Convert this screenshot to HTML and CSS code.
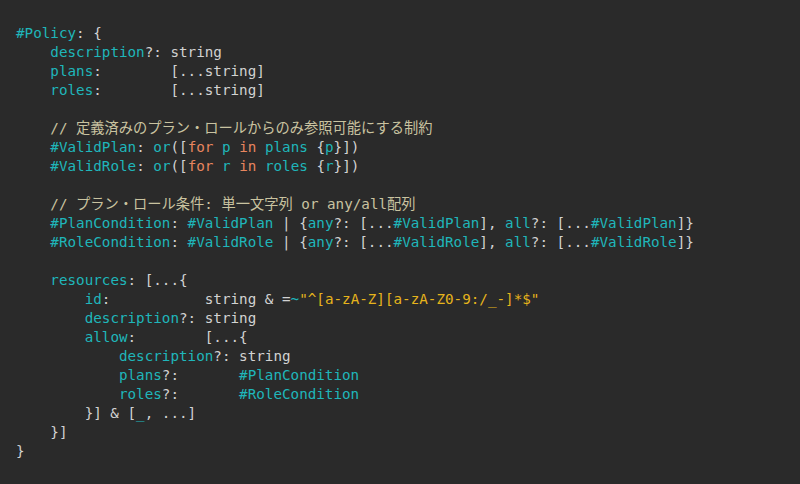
FILE: index.html
```html
<!DOCTYPE html>
<html lang="ja">
<head>
<meta charset="utf-8">
<title>Policy schema</title>
<link rel="stylesheet" href="styles.css">
</head>
<body>
<pre class="code"><span class="k">#Policy</span>: {
    <span class="k">description</span>?: string
    <span class="k">plans</span>:        [...string]
    <span class="k">roles</span>:        [...string]

    <span class="c">// 定義済みのプラン・ロールからのみ参照可能にする制約</span>
    <span class="k">#ValidPlan</span>: <span class="k">or</span>([<span class="o">for</span> <span class="k">p</span> <span class="o">in</span> <span class="k">plans</span> {<span class="k">p</span>}])
    <span class="k">#ValidRole</span>: <span class="k">or</span>([<span class="o">for</span> <span class="k">r</span> <span class="o">in</span> <span class="k">roles</span> {<span class="k">r</span>}])

    <span class="c">// プラン・ロール条件: 単一文字列 or any/all配列</span>
    <span class="k">#PlanCondition</span>: <span class="k">#ValidPlan</span> | {<span class="k">any</span>?: [...<span class="k">#ValidPlan</span>], <span class="k">all</span>?: [...<span class="k">#ValidPlan</span>]}
    <span class="k">#RoleCondition</span>: <span class="k">#ValidRole</span> | {<span class="k">any</span>?: [...<span class="k">#ValidRole</span>], <span class="k">all</span>?: [...<span class="k">#ValidRole</span>]}

    <span class="k">resources</span>: [...{
        <span class="k">id</span>:           string &amp; =<span class="k">~</span><span class="s">"^[a-zA-Z][a-zA-Z0-9:/_-]*$"</span>
        <span class="k">description</span>?: string
        <span class="k">allow</span>:        [...{
            <span class="k">description</span>?: string
            <span class="k">plans</span>?:       <span class="k">#PlanCondition</span>
            <span class="k">roles</span>?:       <span class="k">#RoleCondition</span>
        }] &amp; [<span class="k">_</span>, ...]
    }]
}</pre>
</body>
</html>
```
FILE: styles.css
```css
html, body {
  margin: 0;
  padding: 0;
  background: #2a2a2a;
  height: 100%;
}

.code {
  margin: 0;
  padding: 24px 0 0 16px;
  font-family: "DejaVu Sans Mono", "Noto Sans CJK JP", monospace;
  font-size: 14.25px;
  line-height: 19px;
  color: #d2d2d2;
  white-space: pre;
}

.k { color: #1fb6ba; }
.c { color: #c9c3a0; }
.o { color: #e8865f; }
.s { color: #e6b41c; }
```
